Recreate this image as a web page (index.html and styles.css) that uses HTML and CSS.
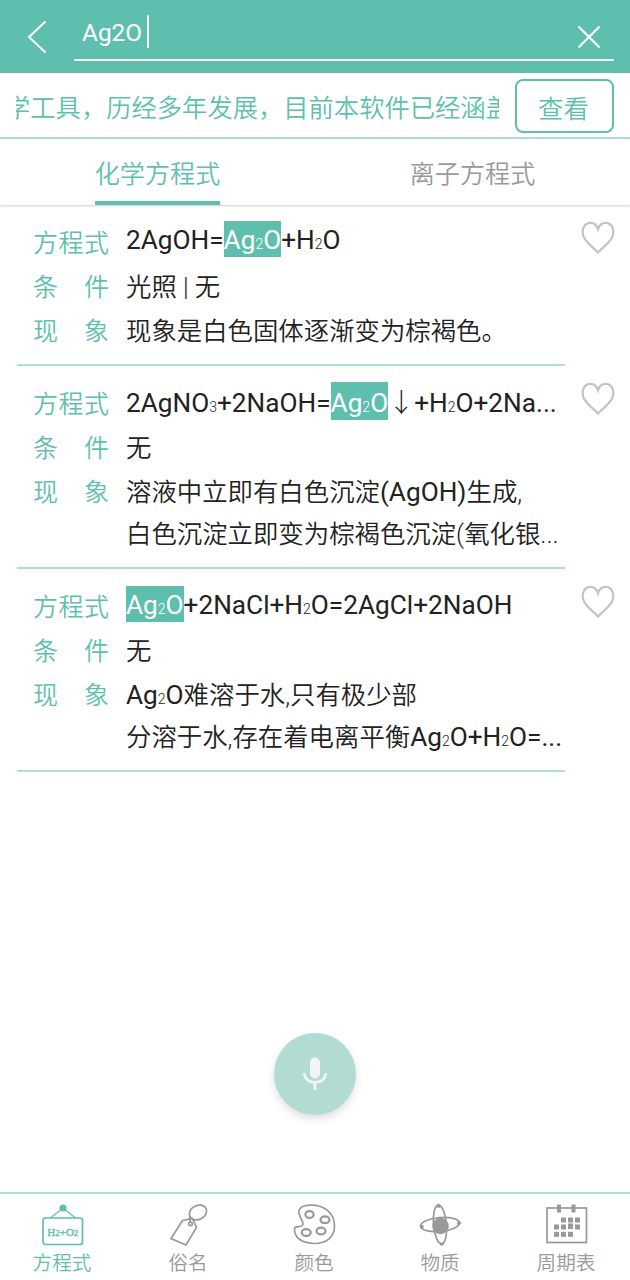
FILE: index.html
```html
<!DOCTYPE html>
<html lang="zh-CN">
<head>
    <meta charset="UTF-8">
    <meta name="viewport" content="width=device-width, initial-scale=1.0">
    <title>化学方程式</title>
    <link rel="stylesheet" href="styles.css">
</head>
<body>
    <div class="app">
        <header class="search-bar">
            <svg class="back" width="22" height="36" viewBox="0 0 22 36">
                <path d="M19.5 3.5 L3 19 L19.5 34.5"/>
            </svg>
            <div class="search-field">
                <span class="search-text">Ag2O</span>
                <span class="cursor"></span>
                <svg class="clear" width="24" height="24" viewBox="0 0 24 24">
                    <path d="M1.5 1.5 L22.5 22.5 M22.5 1.5 L1.5 22.5"/>
                </svg>
            </div>
        </header>

        <div class="notice">
            <div class="notice-window"><div class="notice-text">学工具，历经多年发展，目前本软件已经涵盖</div></div>
            <button class="notice-btn">查看</button>
        </div>

        <nav class="tabs">
            <div class="tab active"><span>化学方程式</span></div>
            <div class="tab"><span>离子方程式</span></div>
        </nav>

        <!-- 搜索结果 -->
        <main class="results">
            <article class="item">
                <div class="fields">
                    <div class="label"><span>方</span><span>程</span><span>式</span></div>
                    <div class="value formula">2AgOH=<mark>Ag<small>2</small>O</mark>+H<small>2</small>O</div>
                    <div class="label"><span>条</span><span>件</span></div>
                    <div class="value">光照 | 无</div>
                    <div class="label"><span>现</span><span>象</span></div>
                    <div class="value">现象是白色固体逐渐变为棕褐色。</div>
                </div>
                <svg class="heart" width="34" height="34" viewBox="0 0 34 34">
                    <path d="M17 31.5 C14 28 6 22.5 3 16.5 C0 10 2.5 2.2 9 1.8 C13 1.6 15.8 4.2 17 8.2 C18.2 4.2 21 1.6 25 1.8 C31.5 2.2 34 10 31 16.5 C28 22.5 20 28 17 31.5 Z"/>
                </svg>
            </article>

            <article class="item">
                <div class="fields">
                    <div class="label"><span>方</span><span>程</span><span>式</span></div>
                    <div class="value formula tall">2AgNO<small>3</small>+2NaOH=<mark>Ag<small>2</small>O</mark><span class="arrow">↓</span>+H<small>2</small>O+2Na...</div>
                    <div class="label"><span>条</span><span>件</span></div>
                    <div class="value">无</div>
                    <div class="label"><span>现</span><span>象</span></div>
                    <div class="value">溶液中立即有白色沉淀<span class="chem">(AgOH)</span>生成,</div>
                    <div class="value more">白色沉淀立即变为棕褐色沉淀(氧化银...</div>
                </div>
                <svg class="heart" width="34" height="34" viewBox="0 0 34 34">
                    <path d="M17 31.5 C14 28 6 22.5 3 16.5 C0 10 2.5 2.2 9 1.8 C13 1.6 15.8 4.2 17 8.2 C18.2 4.2 21 1.6 25 1.8 C31.5 2.2 34 10 31 16.5 C28 22.5 20 28 17 31.5 Z"/>
                </svg>
            </article>

            <article class="item">
                <div class="fields">
                    <div class="label"><span>方</span><span>程</span><span>式</span></div>
                    <div class="value formula"><mark>Ag<small>2</small>O</mark>+2NaCl+H<small>2</small>O=2AgCl+2NaOH</div>
                    <div class="label"><span>条</span><span>件</span></div>
                    <div class="value">无</div>
                    <div class="label"><span>现</span><span>象</span></div>
                    <div class="value"><span class="chem">Ag<small>2</small>O</span>难溶于水,只有极少部</div>
                    <div class="value more">分溶于水,存在着电离平衡<span class="chem">Ag<small>2</small>O+H<small>2</small>O=...</span></div>
                </div>
                <svg class="heart" width="34" height="34" viewBox="0 0 34 34">
                    <path d="M17 31.5 C14 28 6 22.5 3 16.5 C0 10 2.5 2.2 9 1.8 C13 1.6 15.8 4.2 17 8.2 C18.2 4.2 21 1.6 25 1.8 C31.5 2.2 34 10 31 16.5 C28 22.5 20 28 17 31.5 Z"/>
                </svg>
            </article>
        </main>

        <button class="mic">
            <svg width="26" height="34" viewBox="0 0 26 34">
                <rect x="8" y="0.5" width="10" height="21" rx="5"/>
                <path d="M2 16 C3 22 7 25.5 13 25.5 C19 25.5 23 22 24 16 M13 25.5 V33"/>
            </svg>
        </button>

        <nav class="bottom-nav">
            <div class="nav-item active">
                <svg width="42" height="42" viewBox="0 0 42 42">
                    <circle class="fill" cx="21" cy="4" r="3.6"/>
                    <path class="thin" d="M18.5 6 L8.5 14 M23.5 6 L33.5 14"/>
                    <rect x="1" y="14" width="39.5" height="26.5" rx="2.5"/>
                    <text x="20.8" y="31.5" text-anchor="middle">H<tspan class="sub">2</tspan>+O<tspan class="sub">2</tspan></text>
                </svg>
                <span>方程式</span>
            </div>
            <div class="nav-item">
                <svg width="42" height="42" viewBox="0 0 42 42">
                    <ellipse cx="30" cy="8.5" rx="9" ry="7" transform="rotate(-27 30 8.5)"/>
                    <path d="M14.5 16.5 L24.5 14.5 L28.5 23.5 L18 41 L3 34.5 Z"/>
                    <circle cx="22.5" cy="19.8" r="1.8"/>
                    <path d="M22 18.5 L22 12"/>
                </svg>
                <span>俗名</span>
            </div>
            <div class="nav-item">
                <svg width="42" height="42" viewBox="0 0 42 42">
                    <path d="M6 12 C2.5 5 7.5 1.5 16.5 1.2 C30.5 1 40.5 9 40.5 22 C40.5 33 32.5 39.5 20.5 39.5 C8.5 39.5 0 34 0.5 24.5 C1 21.5 8.5 24 9 20.5 C9.5 17.5 7 15.5 6 12 Z"/>
                    <g class="bold">
                        <ellipse cx="15.5" cy="10.5" rx="4.1" ry="3.4"/>
                        <ellipse cx="31" cy="15.7" rx="4.5" ry="3.3"/>
                        <ellipse cx="12.2" cy="28.5" rx="4.5" ry="3.4"/>
                        <ellipse cx="27" cy="27" rx="4.5" ry="3.3"/>
                    </g>
                </svg>
                <span>颜色</span>
            </div>
            <div class="nav-item">
                <svg width="42" height="42" viewBox="0 0 42 42">
                    <ellipse cx="20" cy="20.5" rx="6.5" ry="19.5" transform="rotate(-5 20 20.5)"/>
                    <ellipse cx="20" cy="20.5" rx="19.5" ry="7" transform="rotate(-5 20 20.5)"/>
                    <circle class="fill" cx="20.5" cy="22" r="8.3"/>
                    <circle class="fill" cx="18.8" cy="2" r="2"/>
                    <circle class="fill" cx="21.8" cy="40" r="1.8"/>
                    <circle class="fill" cx="1.8" cy="22.7" r="2"/>
                    <circle class="fill" cx="39" cy="19" r="2"/>
                </svg>
                <span>物质</span>
            </div>
            <div class="nav-item">
                <svg width="42" height="42" viewBox="0 0 42 42">
                    <rect x="1" y="4" width="39.5" height="34.5"/>
                    <path class="ring" d="M13 0.5 V8.5 M27.5 0.5 V8.5"/>
                    <g class="fill">
                        <rect x="15" y="13.5" width="5" height="5"/>
                        <rect x="22" y="13.5" width="5" height="5"/>
                        <rect x="29" y="13.5" width="5" height="5"/>
                        <rect x="8" y="20.5" width="5" height="5"/>
                        <rect x="15" y="20.5" width="5" height="5"/>
                        <rect x="22" y="19.5" width="5" height="5.5"/>
                        <rect x="29" y="20.5" width="5" height="5"/>
                        <rect x="8" y="27.8" width="5" height="5"/>
                        <rect x="15" y="27.8" width="5" height="5"/>
                        <rect x="22" y="27.8" width="5" height="5"/>
                    </g>
                </svg>
                <span>周期表</span>
            </div>
        </nav>
    </div>
</body>
</html>
```
FILE: styles.css
```css
* {
    box-sizing: border-box;
}
body {
    margin: 0;
    background-color: #fff;
    color: #222;
    font-family: Roboto, "Noto Sans CJK SC", sans-serif;
    font-size: 25.4px;
    font-weight: 350;
}
.app {
    display: flex;
    flex-direction: column;
    height: 1280px;
    overflow: hidden;
}
svg {
    display: block;
    fill: none;
}
button {
    padding: 0;
    font: inherit;
}

/* 顶部搜索 */
.search-bar {
    display: flex;
    height: 73px;
    padding: 0 16px 0 26px;
    background-color: #5fbfae;
}
.back {
    margin-top: 18px;
    stroke: #fff;
    stroke-width: 2;
}
.search-field {
    display: flex;
    flex: 1;
    height: 61px;
    margin-left: 26px;
    padding: 0 13px 0 8px;
    border-bottom: 2px solid #fff;
    color: #fff;
}
.search-text {
    font-size: 24.4px;
    font-weight: 400;
    line-height: 66px;
}
.cursor {
    width: 2px;
    height: 33px;
    margin: 15px 0 0 5px;
    background-color: #fff;
}
.clear {
    margin: 25px 0 0 auto;
    stroke: #fff;
    stroke-width: 2.2;
}

/* 滚动公告 */
.notice {
    display: flex;
    align-items: center;
    justify-content: space-between;
    height: 66px;
    padding: 2px 16px 0;
    border-bottom: 2px solid #b0ddd4;
    color: #5fbfae;
}
.notice-window {
    width: 483px;
    overflow: hidden;
}
.notice-text {
    margin-left: -11px;
    padding-top: 6px;
    font-size: 25.3px;
    line-height: 40px;
    white-space: nowrap;
}
.notice-btn {
    width: 99px;
    height: 54px;
    padding: 1px 2px 0 0;
    border: 2px solid #5fbfae;
    border-radius: 8px;
    background-color: #fff;
    color: #5fbfae;
}

.tabs {
    display: flex;
    height: 66px;
    box-shadow: 0 1px 2px rgba(0, 0, 0, 0.2);
}
.tab {
    display: flex;
    flex: 1;
    justify-content: center;
    color: #999;
    font-size: 25.1px;
}
.tab span {
    padding-top: 3px;
    line-height: 66px;
}
.tab.active span {
    height: 66px;
    padding-top: 6px;
    border-bottom: 4px solid #5fbfae;
    color: #5fbfae;
    line-height: 60px;
}

/* 结果列表 */
.results {
    flex: 1;
}
.item {
    display: flex;
    justify-content: space-between;
    padding-right: 15px;
}
.fields {
    display: grid;
    grid-template-columns: 75px 1fr;
    column-gap: 17px;
    width: 548px;
    margin-left: 17px;
    padding: 16px 0 12px 17px;
    border-bottom: 2px solid #a9dfd5;
    white-space: nowrap;
}
.item:first-child .fields {
    padding-bottom: 11px;
}
.label {
    display: flex;
    justify-content: space-between;
    height: 44px;
    margin-left: -1px;
    line-height: 46px;
    color: #5fbfae;
    font-size: 25px;
}
.value {
    height: 44px;
    line-height: 45px;
}
.more {
    grid-column: 2;
    height: 41px;
    line-height: 41px;
}
.chem {
    font-size: 26.2px;
    font-weight: 400;
}
.formula {
    font-size: 26.2px;
    font-weight: 400;
    line-height: 40px;
}
.item:first-child .formula {
    line-height: 38px;
}
.formula.tall {
    line-height: 40px;
}
mark {
    display: inline-block;
    height: 36px;
    background-color: #5fbfae;
    color: #fff;
    line-height: 38px;
}
.tall mark {
    height: 38px;
    line-height: 42px;
}
small {
    font-size: 14px;
    font-weight: 350;
}
.arrow {
    display: inline-block;
    width: 26px;
    text-align: center;
    font-family: "Noto Sans CJK SC", sans-serif;
    font-weight: 300;
    line-height: 20px;
}
.heart {
    margin-top: 16px;
    stroke: #c3c3c3;
    stroke-width: 2.2;
}

.mic {
    display: flex;
    align-items: center;
    justify-content: center;
    align-self: center;
    width: 82px;
    height: 82px;
    margin-bottom: 77px;
    border: none;
    border-radius: 50%;
    background-color: #b2dbd3;
    box-shadow: 0 4px 9px rgba(0, 0, 0, 0.13);
}
.mic rect {
    fill: #f1f5f4;
}
.mic path {
    stroke: #f1f5f4;
    stroke-width: 2.8;
}

/* 底部导航 */
.bottom-nav {
    display: flex;
    height: 88px;
    border-top: 2px solid #a9dfd5;
}
.nav-item {
    display: flex;
    flex: 1;
    flex-direction: column;
    align-items: center;
    padding-top: 10px;
    color: #999;
    font-size: 19.6px;
    line-height: 35px;
}
.nav-item span {
    padding-right: 2px;
}
.nav-item.active {
    color: #5fbfae;
}
.nav-item svg {
    overflow: visible;
    stroke: currentColor;
    stroke-width: 1.7;
}
.nav-item .fill {
    fill: currentColor;
    stroke: none;
}
.nav-item .thin {
    stroke-width: 1.2;
}
.nav-item .bold {
    stroke-width: 2.2;
}
.nav-item .ring {
    stroke-width: 4;
}
.nav-item text {
    fill: currentColor;
    stroke-width: 0.4;
    font-family: "Liberation Serif", serif;
    font-size: 11px;
    font-weight: 400;
}
.nav-item .sub {
    font-size: 9px;
}
```
